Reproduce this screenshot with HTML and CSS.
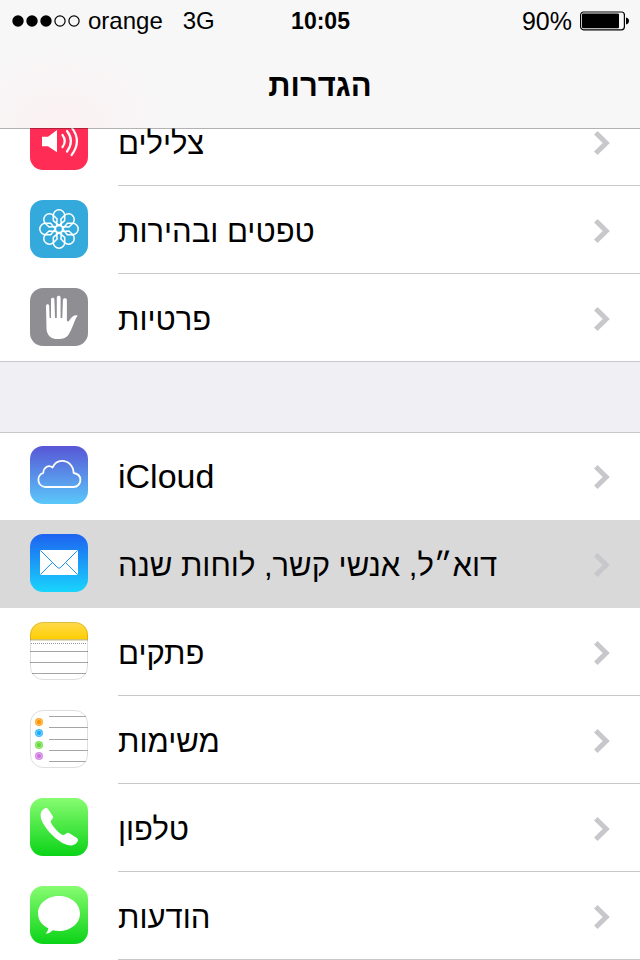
FILE: index.html
```html
<!DOCTYPE html>
<html lang="he">
<head>
<meta charset="utf-8">
<meta name="viewport" content="width=device-width">
<title>הגדרות</title>
<link rel="stylesheet" href="styles.css">
</head>
<body>
<header class="top">
  <div class="status">
    <div class="status-side">
      <svg class="signal" viewBox="0 0 68 12" aria-hidden="true">
        <circle cx="6" cy="6" r="5.7"/><circle cx="20" cy="6" r="5.7"/><circle cx="34" cy="6" r="5.7"/>
        <circle class="off" cx="48" cy="6" r="5.1"/><circle class="off" cx="62" cy="6" r="5.1"/>
      </svg>
      <span>orange</span>
      <span class="network">3G</span>
    </div>
    <time class="clock">10:05</time>
    <div class="status-side status-end">
      <span class="charge">90%</span>
      <svg class="battery" viewBox="0 0 50 20" aria-hidden="true">
        <rect class="case" x="0.6" y="1" width="43.8" height="17.8" rx="3"/>
        <rect x="2" y="2.6" width="37" height="14.6" rx="1"/>
        <path d="M46 6.6C50 7 50 13 46 13.4Z"/>
      </svg>
    </div>
  </div>
  <h1 class="title">הגדרות</h1>
</header>

<main class="settings">
  <nav class="group">
    <a class="row" href="#sounds">
      <svg class="icon" viewBox="0 0 58 58" aria-hidden="true">
        <rect width="58" height="58" rx="13" fill="#ff2d55"/>
        <path fill="#fff" d="M12 24.7H18L27 18V40.3L18 34.3H12Z"/>
        <path fill="none" stroke="#fff" stroke-width="2.2" stroke-linecap="round" d="M32.5 23Q37 29 32.5 35.2M37 19Q44.8 29 37 39.5M41.6 15.3Q52.2 29 41.6 43"/>
      </svg>
      <span class="cell"><span class="label" dir="rtl">צלילים</span><svg class="chevron" viewBox="0 0 16 24" aria-hidden="true"><path d="M1.8 1.8L12.2 12L1.8 22.2"/></svg></span>
    </a>
    <a class="row" href="#wallpaper">
      <svg class="icon" viewBox="0 0 58 58" aria-hidden="true">
        <defs><path id="petal" d="M29 25.4L23.3 20.6V15.5A5.7 5.7 0 0 1 34.7 15.5V20.6Z"/></defs>
        <rect width="58" height="58" rx="13" fill="#34aadc"/>
        <g fill="none" stroke="#fff" stroke-width="1.5" stroke-linejoin="round">
          <use href="#petal"/><use href="#petal" transform="rotate(45 29 29)"/><use href="#petal" transform="rotate(90 29 29)"/><use href="#petal" transform="rotate(135 29 29)"/>
          <use href="#petal" transform="rotate(180 29 29)"/><use href="#petal" transform="rotate(225 29 29)"/><use href="#petal" transform="rotate(270 29 29)"/><use href="#petal" transform="rotate(315 29 29)"/>
          <circle cx="29" cy="29" r="3.6"/>
        </g>
      </svg>
      <span class="cell"><span class="label" dir="rtl">טפטים ובהירות</span><svg class="chevron" viewBox="0 0 16 24" aria-hidden="true"><path d="M1.8 1.8L12.2 12L1.8 22.2"/></svg></span>
    </a>
    <a class="row row-end" href="#privacy">
      <svg class="icon" viewBox="0 0 58 58" aria-hidden="true">
        <rect width="58" height="58" rx="13" fill="#8e8e93"/>
        <path fill="#fff" d="M16 18.2C16 15.7 19.2 15.7 19.2 18.2L19.6 30H21V11.5C21 9 24.4 9 24.4 11.5L25 30H26.8V9.8C26.8 7.2 30.6 7.2 30.6 9.8V30H32.3L32.9 12C33 9.6 36.9 9.6 36.9 12V32.5C37.2 33.8 38.5 33.8 39.3 32.5C41.5 28.8 43.8 26.8 47.3 27.3C47.6 28.3 46.7 28.9 45.8 30.5C43.6 35.2 42 41 38.8 46.3C36.8 49.7 33 51.1 28 51.1C21 51.1 17 47.6 16.5 41Z"/>
      </svg>
      <span class="cell"><span class="label" dir="rtl">פרטיות</span><svg class="chevron" viewBox="0 0 16 24" aria-hidden="true"><path d="M1.8 1.8L12.2 12L1.8 22.2"/></svg></span>
    </a>
  </nav>

  <nav class="group">
    <a class="row row-plain" href="#icloud">
      <svg class="icon" viewBox="0 0 58 58" aria-hidden="true">
        <defs><linearGradient id="cloud" x2="0" y2="1"><stop stop-color="#5856d6"/><stop offset="1" stop-color="#5ac8fa"/></linearGradient></defs>
        <rect width="58" height="58" rx="13" fill="url(#cloud)"/>
        <path fill="none" stroke="#fff" stroke-width="1.8" stroke-linejoin="round" d="M15.5 41A7.3 7.3 0 0 1 13.3 26.8C13.8 20.8 18.8 18.4 22.6 21.5C24.6 17 28.2 14.9 32 14.9C38.5 14.9 43.5 20 43.6 27C48 27.6 50.4 30.5 50.4 34C50.4 38 47.4 41 43.5 41Z"/>
      </svg>
      <span class="cell cell-latin"><span>iCloud</span><svg class="chevron" viewBox="0 0 16 24" aria-hidden="true"><path d="M1.8 1.8L12.2 12L1.8 22.2"/></svg></span>
    </a>
    <a class="row row-plain row-pressed" href="#mail" aria-current="true">
      <svg class="icon" viewBox="0 0 58 58" aria-hidden="true">
        <defs><linearGradient id="mail" x2="0" y2="1"><stop stop-color="#1d62f0"/><stop offset="1" stop-color="#19d5fd"/></linearGradient></defs>
        <rect width="58" height="58" rx="13" fill="url(#mail)"/>
        <rect x="10" y="16" width="38" height="25" rx="1" fill="#fff"/>
        <path fill="none" stroke="#1e93f5" stroke-width="1" d="M10.5 16.5L27 33Q29 35.8 31 33L47.5 16.5M10.5 40.5L22.3 28.6M47.5 40.5L35.7 28.6"/>
      </svg>
      <span class="cell"><span class="label" dir="rtl">דוא״ל, אנשי קשר, לוחות שנה</span><svg class="chevron" viewBox="0 0 16 24" aria-hidden="true"><path d="M1.8 1.8L12.2 12L1.8 22.2"/></svg></span>
    </a>
    <a class="row" href="#notes">
      <svg class="icon" viewBox="0 0 58 58" aria-hidden="true">
        <defs>
          <clipPath id="tile"><rect width="58" height="58" rx="13"/></clipPath>
          <linearGradient id="note" x2="0" y2="1"><stop stop-color="#ffdb4c"/><stop offset="1" stop-color="#ffcd02"/></linearGradient>
        </defs>
        <g clip-path="url(#tile)">
          <rect width="58" height="58" fill="#fff"/>
          <rect width="58" height="17.5" fill="url(#note)"/>
          <path stroke="#b5a56c" d="M0 17.9H58"/>
          <path stroke="#999" stroke-dasharray="1 1" d="M1 21.5H57"/>
          <path stroke="#a5a5a8" d="M0 29.5H58M0 40.5H58M2 51.5H56"/>
        </g>
        <rect x="0.5" y="0.5" width="57" height="57" rx="12.5" fill="none" stroke="#000" stroke-opacity=".13"/>
      </svg>
      <span class="cell"><span class="label" dir="rtl">פתקים</span><svg class="chevron" viewBox="0 0 16 24" aria-hidden="true"><path d="M1.8 1.8L12.2 12L1.8 22.2"/></svg></span>
    </a>
    <a class="row" href="#reminders">
      <svg class="icon" viewBox="0 0 58 58" aria-hidden="true">
        <rect x="0.5" y="0.5" width="57" height="57" rx="12.5" fill="#fff" stroke="#dedede"/>
        <path stroke="#a5a5a8" d="M19 6.5H56M19 17.5H58M19 29.5H58M19 40.5H58M19 51.5H56"/>
        <g stroke-opacity=".65" stroke-width="1.4">
          <circle cx="9" cy="12" r="3.4" fill="#ff9500" stroke="#ff9500"/><circle cx="9" cy="23" r="3.4" fill="#1badf8" stroke="#1badf8"/>
          <circle cx="9" cy="35" r="3.4" fill="#63da38" stroke="#63da38"/><circle cx="9" cy="46" r="3.4" fill="#cc73e1" stroke="#cc73e1"/>
        </g>
        <g fill="none" stroke="#fff" stroke-opacity=".5" stroke-width=".8"><circle cx="9" cy="12" r="2.7"/><circle cx="9" cy="23" r="2.7"/><circle cx="9" cy="35" r="2.7"/><circle cx="9" cy="46" r="2.7"/></g>
      </svg>
      <span class="cell"><span class="label" dir="rtl">משימות</span><svg class="chevron" viewBox="0 0 16 24" aria-hidden="true"><path d="M1.8 1.8L12.2 12L1.8 22.2"/></svg></span>
    </a>
    <a class="row" href="#phone">
      <svg class="icon" viewBox="0 0 58 58" aria-hidden="true">
        <defs><linearGradient id="green" x2="0" y2="1"><stop stop-color="#87fc70"/><stop offset="1" stop-color="#0bd318"/></linearGradient></defs>
        <rect width="58" height="58" rx="13" fill="url(#green)"/>
        <path fill="#fff" d="M14.6 10.5C16.3 9.7 17.4 10 18.4 11.4L22.6 17.7C23.6 19.2 23.2 20 22 21.2C20.6 22.6 20.4 23.7 21.3 25.3C23.8 29.8 27.5 33.8 31.6 36.5C33 37.4 34.3 37 35.8 35.8C37.3 34.7 38.3 34.5 39.8 35.4L46.6 39.8C48.4 41 48.5 42.2 47.3 44C45 47.2 41.5 48.2 37.5 47C32.5 45.6 26.6 41.6 21.2 36C14.6 29.2 10.6 22 10.6 17.3C10.6 14 12 11.8 14.6 10.5Z"/>
      </svg>
      <span class="cell"><span class="label" dir="rtl">טלפון</span><svg class="chevron" viewBox="0 0 16 24" aria-hidden="true"><path d="M1.8 1.8L12.2 12L1.8 22.2"/></svg></span>
    </a>
    <a class="row" href="#messages">
      <svg class="icon" viewBox="0 0 58 58" aria-hidden="true">
        <rect width="58" height="58" rx="13" fill="url(#green)"/>
        <path fill="#fff" d="M29 10C40.6 10 50 17.6 50 27.5S40.6 45 29 45C26.7 45 24.8 44.8 22.8 44.2C20.8 46.2 18.3 47.6 15.6 47.6C17 46.3 18.1 44.4 18.3 42.3C12 39.2 8 34 8 27.5C8 17.6 17.4 10 29 10Z"/>
      </svg>
      <span class="cell"><span class="label" dir="rtl">הודעות</span><svg class="chevron" viewBox="0 0 16 24" aria-hidden="true"><path d="M1.8 1.8L12.2 12L1.8 22.2"/></svg></span>
    </a>
  </nav>
</main>
</body>
</html>
```
FILE: styles.css
```css
* {
  box-sizing: border-box;
}

body {
  margin: 0;
  background: #efeff4;
  color: #000;
  font-family: "Liberation Sans", Arial, sans-serif;
}

.top {
  position: sticky;
  top: 0;
  z-index: 1;
  background: radial-gradient(ellipse 120px 90px at 60px 100%, #fbf1f3, #f7f7f7) padding-box;
  border-bottom: 1px solid rgba(0, 0, 0, .3);
}

.status {
  display: flex;
  align-items: center;
  height: 42px;
  padding: 0 11px 0 12px;
  font-size: 24px;
  line-height: 28px;
}

.status-side {
  display: flex;
  flex: 1;
  align-items: center;
  gap: 8px;
}

.status-end {
  justify-content: flex-end;
}

.signal {
  width: 68px;
  height: 12px;
}

.signal .off,
.battery .case {
  fill: none;
  stroke: #000;
  stroke-width: 1.2;
}

.network {
  margin-left: 12px;
}

.clock {
  font-size: 23px;
  font-weight: bold;
}

.charge {
  font-size: 25px;
}

.battery {
  width: 50px;
  height: 20px;
  margin-right: -1px;
}

.title {
  margin: 0;
  height: 86px;
  font-size: 31px;
  line-height: 88px;
  text-align: center;
}

/* The list is scrolled part of a row under the bar. */
.settings {
  margin-top: -31px;
}

.group {
  background: #fff;
}

.group + .group {
  margin-top: 70px;
  border-top: 1px solid #c8c7cc;
}

.row {
  display: flex;
  gap: 30px;
  height: 88px;
  padding-left: 30px;
  color: inherit;
  text-decoration: none;
}

.icon {
  flex: none;
  width: 58px;
  height: 58px;
  margin-top: 14px;
}

.group + .group .row:first-child {
  height: 87px;
}

.group + .group .row:first-child .icon {
  margin-top: 13px;
}

.cell {
  display: flex;
  flex: 1;
  align-items: center;
  justify-content: space-between;
  padding: 2px 30px 0 0;
  border-bottom: 1px solid #c8c7cc;
  font-size: 31px;
}

.cell-latin {
  padding-top: 0;
  font-size: 34px;
}

.label {
  padding-top: 2px;
}

.row-end {
  border-bottom: 1px solid #c8c7cc;
}

.row-end .cell,
.row-plain .cell {
  border-bottom: 0;
}

.row-pressed {
  background: #d9d9d9;
}

.chevron {
  width: 16px;
  height: 24px;
  fill: none;
  stroke: #c7c7cc;
  stroke-width: 5;
}
```
